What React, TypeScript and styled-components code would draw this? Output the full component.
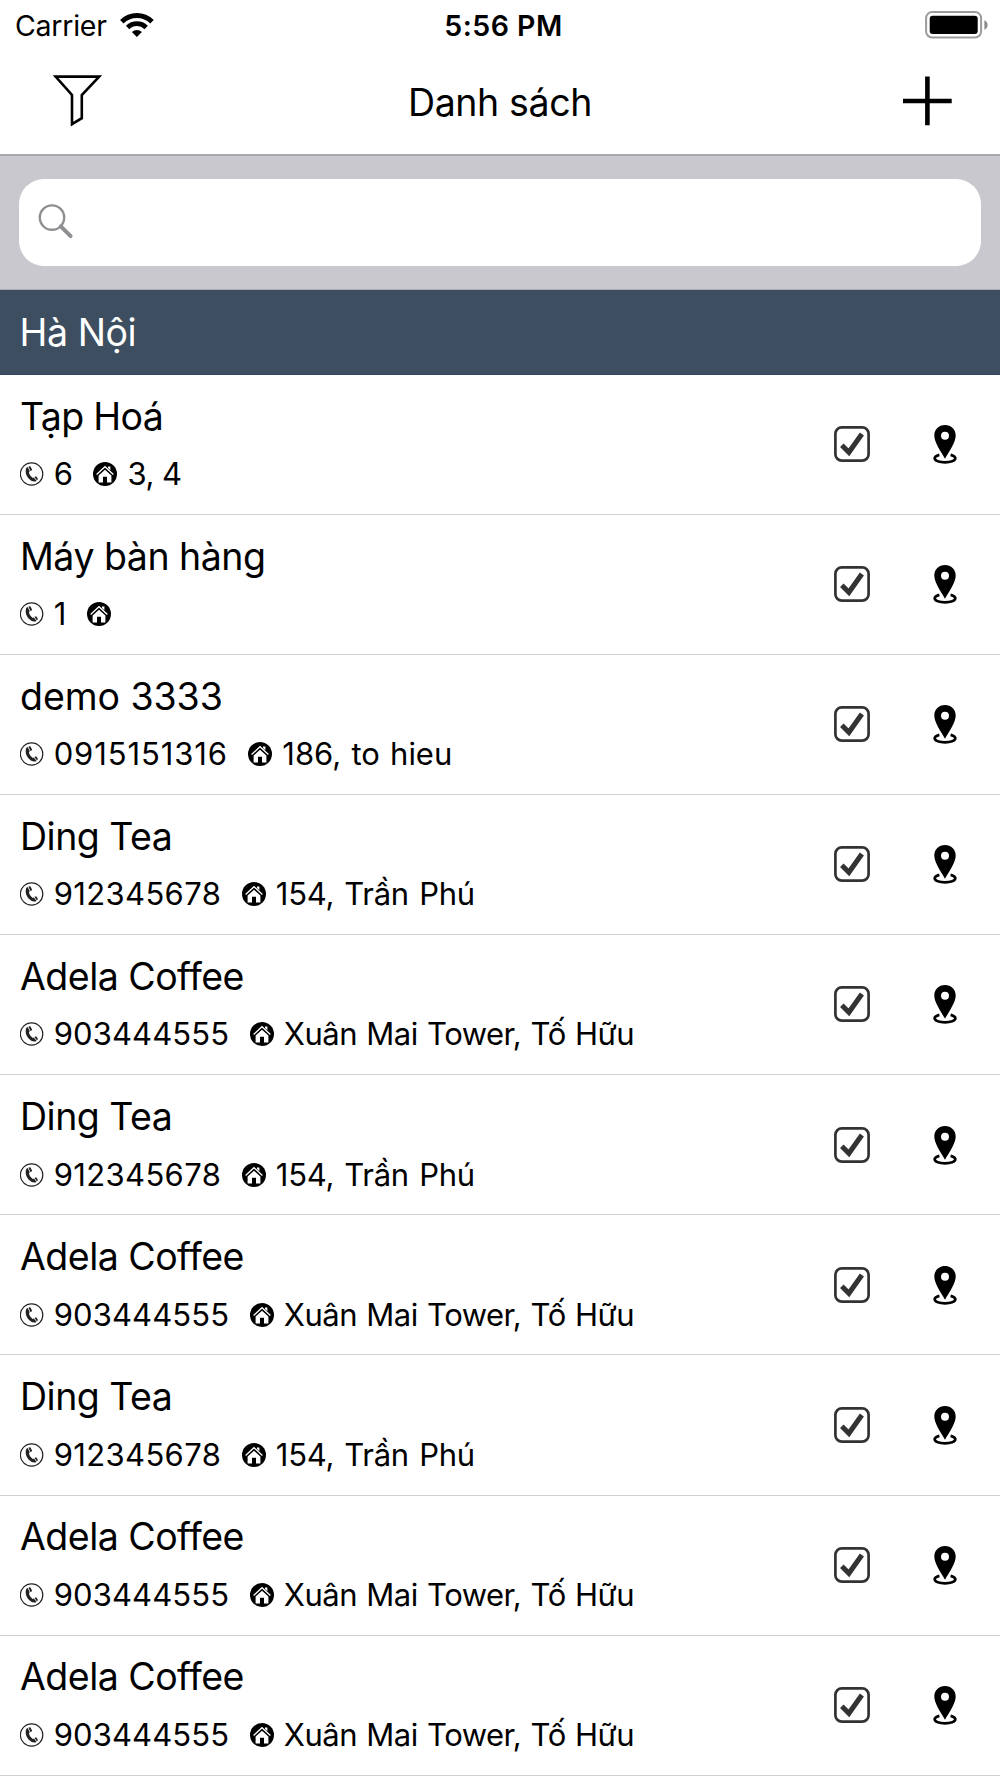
import React from "react";
import styled, { createGlobalStyle } from "styled-components";

const GlobalStyle = createGlobalStyle`
  *, *::before, *::after { box-sizing: border-box; }
  html, body { margin: 0; padding: 0; background: #fff; }
  body { font-family: Inter, "Noto Sans", sans-serif; color: #000; overflow: hidden; }
  svg { display: block; flex: none; }
`;

const Screen = styled.div`
  width: 1000px;
  height: 1778px;
  display: flex;
  flex-direction: column;
  overflow: hidden;
  background: #fff;
`;

const Tracked = styled.span<{ $track?: number; $word?: number }>`
  letter-spacing: ${(p) => p.$track ?? 0}px;
  word-spacing: ${(p) => p.$word ?? 0}px;
  white-space: pre;
`;

const StatusBar = styled.header`
  display: grid;
  grid-template-columns: 1fr auto 1fr;
  align-items: center;
  height: 50px;
  padding: 0 12px 0 15px;
  font-size: 28.5px;
  line-height: 52px;
`;

const Carrier = styled.div`
  display: flex;
  align-items: center;
  gap: 13.6px;
`;

const Clock = styled(Tracked)`
  font-weight: 600;
  padding-left: 4px;
`;

const BatterySlot = styled.div`
  justify-self: end;
  margin-top: -3px;
`;

const WifiSlot = styled.div`
  margin-top: -3px;
`;

const NavBar = styled.nav`
  display: grid;
  grid-template-columns: 1fr auto 1fr;
  align-items: center;
  height: 106px;
  padding: 0 47px 0 50px;
  border-bottom: 2px solid #a9a8ad;
`;

const NavTitle = styled.h1`
  margin: 0 0 0 -3px;
  font-size: 37.5px;
  font-weight: 400;
  line-height: 106px;
  height: 104px;
`;

const IconButton = styled.button<{ $end?: boolean }>`
  appearance: none;
  border: 0;
  padding: 0;
  margin-top: -2px;
  background: none;
  justify-self: ${(p) => (p.$end ? "end" : "start")};
`;

const SearchBar = styled.div`
  height: 134px;
  padding: 23px 19px 23.5px;
  background: #c9c8ce;
  border-bottom: 1px solid #a9adb4;
`;

const SearchField = styled.div`
  display: flex;
  align-items: center;
  height: 87px;
  padding: 0 0 2px 18px;
  border-radius: 25px;
  background: #fff;
`;

const SectionHeader = styled.h2`
  margin: 0;
  height: 84.8px;
  padding-left: 19.6px;
  background: #3c4e60;
  border-bottom: 1px solid #33465a;
  color: #fff;
  font-size: 37.5px;
  font-weight: 400;
  line-height: 86px;
`;

const List = styled.ul`
  list-style: none;
  margin: 0;
  padding: 0;
`;

const Row = styled.li`
  display: flex;
  align-items: flex-start;
  height: 140.1px;
  padding: 17.75px 42.5px 0 20px;
  border-bottom: 1px solid #d0d0d4;
`;

const Details = styled.div`
  flex: 1;
  display: flex;
  flex-direction: column;
  gap: 13.5px;
`;

const Name = styled.div`
  font-size: 37.5px;
  line-height: 48px;
`;

const Meta = styled.div`
  display: flex;
  align-items: center;
  height: 40px;
  font-size: 31px;
  line-height: 40px;
`;

const Phone = styled(Tracked)`
  padding: 0 20.5px 0 9.7px;
`;

const Address = styled(Tracked)`
  padding-left: 10.1px;
`;

const Actions = styled.div`
  display: flex;
  align-items: center;
  gap: 60.5px;
  height: 103px;
`;

const WifiIcon = () => (
  <svg width="34" height="26" viewBox="0 0 34 26">
    <g transform="translate(16.9 25)">
      <path d="M-15.1-15.2A21.4 21.4 0 0 1 15.1-15.2" fill="none" stroke="#000" strokeWidth="4.9" />
      <path d="M-9.3-9.5A13.3 13.3 0 0 1 9.3-9.5" fill="none" stroke="#000" strokeWidth="4.8" />
      <path d="M0 0L-5-5A7.1 7.1 0 0 1 5-5Z" />
    </g>
  </svg>
);

const BatteryIcon = () => (
  <svg width="63" height="28" viewBox="0 0 63 28">
    <rect x="1.1" y="1.1" width="55" height="25.4" rx="6" fill="none" stroke="#9b9b9b" strokeWidth="2" />
    <rect x="4.7" y="4.7" width="48" height="18.2" rx="3" />
    <path d="M59.4 9.2C63.6 10.6 63.6 17.3 59.4 18.7Z" fill="#8a8a8a" />
  </svg>
);

const FilterIcon = () => (
  <svg width="54" height="54" viewBox="0 0 54 54">
    <path
      d="M5.6 2.6H49.2L31.8 21V44.2L22 50.2V21Z"
      fill="none"
      stroke="#000"
      strokeWidth="2.6"
      strokeMiterlimit="10"
    />
  </svg>
);

const PlusIcon = () => (
  <svg width="52" height="52" viewBox="0 0 52 52">
    <path d="M2 26H50.7M26.4 1.6V50.3" stroke="#000" strokeWidth="4.6" />
  </svg>
);

const SearchIcon = () => (
  <svg width="38" height="38" viewBox="0 0 38 38" fill="none" stroke="#8e8e93">
    <circle cx="15" cy="14.6" r="12.2" strokeWidth="2.4" />
    <path d="M23.8 23.4L33.6 33.2" strokeWidth="4" strokeLinecap="round" />
  </svg>
);

const PhoneIcon = () => (
  <svg width="24" height="24" viewBox="0 0 24 24">
    <circle cx="11.6" cy="12" r="11.2" fill="#fff" stroke="#222" strokeWidth="1.2" />
    <path
      d="M6.6 5.6L7.6 5L9.8 9.3L8.9 10.2Q9.2 13.4 12.6 16L13.8 15.4L16.5 18.8L15.6 19.4Q12.2 20.3 8.8 16.8Q5.4 13 5.7 8.6Q5.8 6.6 6.6 5.6Z"
      fill="#222"
    />
    <path
      d="M8.4 4.8L9.6 4.2Q10.2 4 10.5 4.6L12 7.5Q12.2 8.2 11.6 8.6L10.5 9.1ZM14.5 15L15.6 14.4Q16.2 14.2 16.6 14.8L17.8 16.8Q18 17.5 17.5 17.8L16.9 18.3Z"
      fill="#222"
    />
  </svg>
);

const HomeIcon = () => (
  <svg width="24" height="24" viewBox="0 0 24 24">
    <circle cx="12" cy="12" r="12" />
    <path d="M3.6 12.5L12 4.7L20.4 12.5" fill="none" stroke="#fff" strokeWidth="1.3" />
    <path d="M15 4.4H17.4V8.3L15 6Z" fill="#fff" />
    <path d="M5.6 13.6L12 7.8L18.4 13.6V20.4H14V14.8H10V20.4H5.6Z" fill="#fff" />
  </svg>
);

const CheckboxIcon = () => (
  <svg width="38" height="38" viewBox="0 0 38 38" fill="none" stroke="#333">
    <rect x="2.4" y="2.4" width="33.2" height="33.2" rx="6.4" strokeWidth="2.7" />
    <path d="M8.8 20.3L15.9 27.3L28.9 9" strokeWidth="5" />
  </svg>
);

const PinIcon = () => (
  <svg width="26" height="40" viewBox="0 0 26 40">
    <path
      d="M13 1C6.9 1 2.3 5.5 2.3 11.4C2.3 18.2 8.2 26 13 34.7C17.8 26 23.7 18.2 23.7 11.4C23.7 5.5 19.1 1 13 1ZM13 7.7A4 4 0 1 1 13 15.7A4 4 0 1 1 13 7.7Z"
      fillRule="evenodd"
    />
    <path
      d="M7.4 30.9C-.2 32.6 1 38.3 13 38.3S26.2 32.6 18.6 30.9"
      fill="none"
      stroke="#000"
      strokeWidth="2.7"
    />
  </svg>
);

type Text = { value: string; track?: number; word?: number };
type Place = { name: Text; phone: Text; address?: Text };

const dingTea: Place = {
  name: { value: "Ding Tea", track: -0.5 },
  phone: { value: "912345678", track: 0.36 },
  address: { value: "154, Trần Phú", track: -0.27, word: 1.8 },
};

const adela: Place = {
  name: { value: "Adela Coffee", track: -0.52 },
  phone: { value: "903444555", track: 0.11 },
  address: { value: "Xuân Mai Tower, Tố Hữu", track: -0.5, word: 1.1 },
};

const places: Place[] = [
  {
    name: { value: "Tạp Hoá", track: -0.68 },
    phone: { value: "6" },
    address: { value: "3, 4", track: -0.5 },
  },
  { name: { value: "Máy bàn hàng", track: -0.5 }, phone: { value: "1", track: 0.6 } },
  {
    name: { value: "demo 3333", track: -0.06 },
    phone: { value: "0915151316", track: 0.88 },
    address: { value: "186, to hieu", track: -0.03, word: 1.6 },
  },
  dingTea,
  adela,
  dingTea,
  adela,
  dingTea,
  adela,
  adela,
];

const PlaceRow = ({ name, phone, address }: Place) => (
  <Row>
    <Details>
      <Name>
        <Tracked $track={name.track}>{name.value}</Tracked>
      </Name>
      <Meta>
        <PhoneIcon />
        <Phone $track={phone.track}>{phone.value}</Phone>
        <HomeIcon />
        {address && (
          <Address $track={address.track} $word={address.word}>
            {address.value}
          </Address>
        )}
      </Meta>
    </Details>
    <Actions>
      <CheckboxIcon />
      <PinIcon />
    </Actions>
  </Row>
);

export default function App() {
  return (
    <>
      <GlobalStyle />
      <Screen>
        <StatusBar>
          <Carrier>
            <Tracked $track={-0.25}>Carrier</Tracked>
            <WifiSlot>
              <WifiIcon />
            </WifiSlot>
          </Carrier>
          <Clock $track={0.48}>5:56 PM</Clock>
          <BatterySlot>
            <BatteryIcon />
          </BatterySlot>
        </StatusBar>
        <NavBar>
          <IconButton aria-label="Filter">
            <FilterIcon />
          </IconButton>
          <NavTitle>
            <Tracked $track={-0.37}>Danh sách</Tracked>
          </NavTitle>
          <IconButton $end aria-label="Add">
            <PlusIcon />
          </IconButton>
        </NavBar>
        <SearchBar>
          <SearchField>
            <SearchIcon />
          </SearchField>
        </SearchBar>
        <SectionHeader>
          <Tracked $track={-0.44}>Hà Nội</Tracked>
        </SectionHeader>
        <List>
          {places.map((place, i) => (
            <PlaceRow key={i} {...place} />
          ))}
        </List>
      </Screen>
    </>
  );
}
